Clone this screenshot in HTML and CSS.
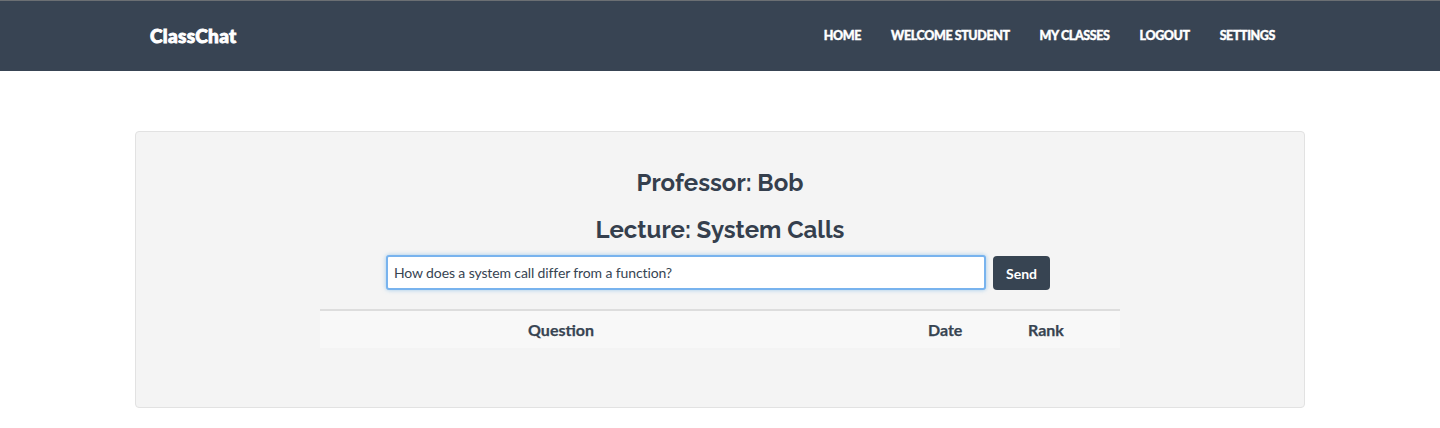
FILE: index.html
```html
<!DOCTYPE html>
<html lang="en">
<head>
<meta charset="utf-8">
<title>ClassChat</title>
<link rel="stylesheet" href="styles.css">
</head>
<body>
<nav class="navbar">
  <div class="nav-inner">
    <a class="brand" href="#">ClassChat</a>
    <ul class="nav-links">
      <li><a href="#">Home</a></li>
      <li><a href="#">Welcome Student</a></li>
      <li><a href="#">My Classes</a></li>
      <li><a href="#">Logout</a></li>
      <li><a href="#">Settings</a></li>
    </ul>
  </div>
</nav>
<main class="container">
  <section class="jumbotron">
    <h3 class="title">Professor: Bob</h3>
    <h3 class="title second">Lecture: System Calls</h3>
    <form class="ask-form">
      <input class="ask-input" type="text" value="How does a system call differ from a function?">
      <button class="send-btn" type="button">Send</button>
    </form>
    <div class="q-table">
      <div class="q-head">
        <div class="col-question">Question</div>
        <div class="col-spacer"></div>
        <div class="col-date">Date</div>
        <div class="col-rank">Rank</div>
      </div>
    </div>
  </section>
</main>
</body>
</html>
```

FILE: styles.css
```css
* { box-sizing: border-box; }
html, body { margin: 0; padding: 0; background: #ffffff; }
body { font-family: Lato, "Open Sans", sans-serif; color: #374452; }

.navbar {
  height: 71px;
  background: #384453;
  border-top: 1px solid #6b6f73;
}
.nav-inner {
  width: 1170px;
  margin: 0 auto;
  padding: 0 15px;
  height: 70px;
  display: flex;
  align-items: center;
  justify-content: space-between;
}
.brand {
  font-family: Lato, sans-serif;
  font-weight: 900;
  font-size: 19px;
  color: #ffffff;
  text-decoration: none;
  letter-spacing: 0.3px;
  -webkit-text-stroke: 0.9px #ffffff;
  margin-top: -2px;
}
.nav-links {
  list-style: none;
  margin: 0;
  padding: 0;
  display: flex;
  margin-right: 15px;
  margin-top: -2px;
}
.nav-links li a {
  display: block;
  padding: 0 15px;
  color: #ffffff;
  text-decoration: none;
  font-weight: 900;
  font-size: 12.5px;
  text-transform: uppercase;
  letter-spacing: -0.4px;
  -webkit-text-stroke: 0.4px #ffffff;
}
.nav-links li:last-child a { padding-right: 0; }

.container {
  width: 1170px;
  margin: 60px auto 0;
}
.jumbotron {
  height: 277px;
  background: #f4f4f4;
  border: 1px solid #e2e2e2;
  border-radius: 4px;
  padding-top: 38px;
}
.title {
  margin: 0;
  text-align: center;
  font-family: Raleway, Lato, sans-serif;
  font-weight: 700;
  font-size: 24px;
  line-height: 26px;
  color: #353f4d;
}
.second { margin-top: 21px; }

.ask-form {
  display: flex;
  justify-content: center;
  align-items: center;
  gap: 7px;
  margin-top: 12px;
  margin-left: -4px;
}
.ask-input {
  width: 600px;
  height: 35px;
  border: 2px solid #78b3ee;
  border-radius: 3px;
  box-shadow: 0 0 4px rgba(102, 175, 233, 0.6);
  padding: 0 6px;
  font-family: Lato, sans-serif;
  font-size: 14px;
  letter-spacing: -0.12px;
  color: #374452;
  background: #ffffff;
  outline: none;
}
.send-btn {
  width: 57px;
  height: 34px;
  border: none;
  border-radius: 4px;
  background: #374452;
  color: #ffffff;
  font-family: Lato, sans-serif;
  font-weight: 700;
  font-size: 14px;
  margin-top: 1px;
}

.q-table {
  width: 800px;
  margin: 19px auto 0;
}
.q-head {
  display: grid;
  grid-template-columns: 482px 118px 100px 100px;
  border-top: 2px solid #dddddd;
  background: #f8f8f8;
  height: 39px;
  align-items: center;
  font-weight: 700;
  font-size: 16px;
  color: #374452;
  -webkit-text-stroke: 0.25px #374452;
}
.col-question { text-align: center; }
.col-date, .col-rank { padding-left: 8px; }
```
